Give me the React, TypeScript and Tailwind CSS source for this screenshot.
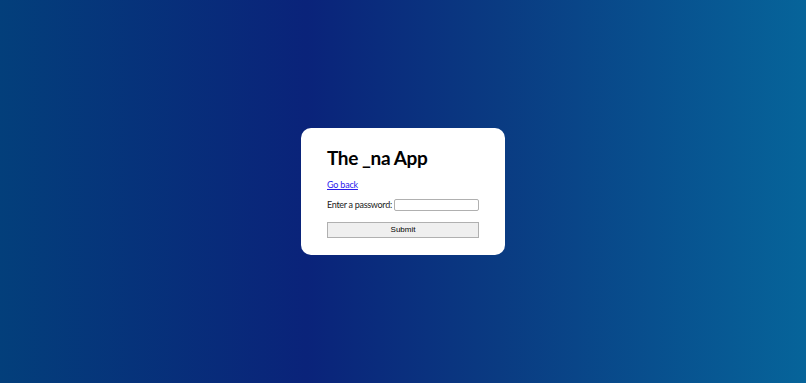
export default function App() {
  return (
    <div className="flex h-[383px] w-full items-center justify-center bg-[linear-gradient(to_right,#033f7b_0%,#0a237a_38%,#0a3b82_62%,#06649a_100%)] font-['Lato',sans-serif]">
      <div className="flex w-[204px] flex-col rounded-[10px] bg-white px-[26px] pt-[17px] pb-[17px]">
        <h1 className="whitespace-nowrap text-[19px] font-bold leading-[26px] tracking-[-0.4px] text-black">The _na App</h1>
        <a href="#" className="mt-[8px] self-start text-[9px] leading-[12px] tracking-[-0.2px] text-[#2a1aee] underline">
          Go back
        </a>
        <div className="mt-[8px] flex items-center whitespace-nowrap text-[9px] leading-[12px] tracking-[-0.3px] text-[#222]">
          <span>Enter a password:</span>
          <input type="password" className="ml-[2px] h-[12px] min-w-0 flex-1 rounded-[2px] border border-[#b0b0b0] bg-white" />
        </div>
        <button className="mt-[11px] h-[16px] w-full border border-[#b0b0b0] bg-[#efefef] font-['Liberation_Sans',sans-serif] text-[8px] text-[#000]">
          Submit
        </button>
      </div>
    </div>
  );
}
